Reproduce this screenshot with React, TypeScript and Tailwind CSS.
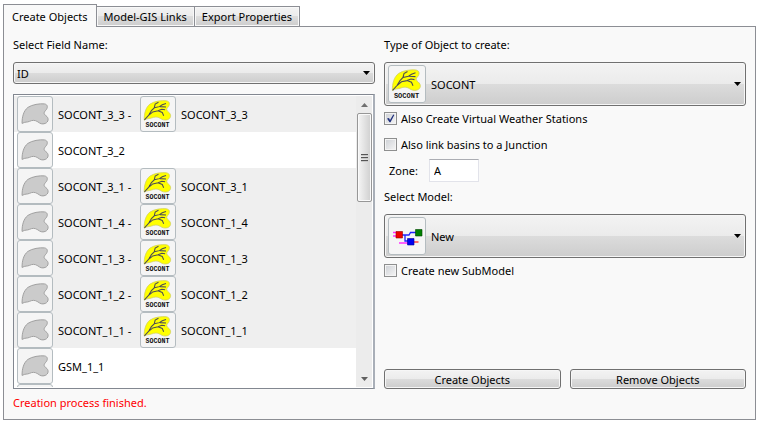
import { useState } from "react";
import type { ReactNode } from "react";

const raised =
  "rounded-[3px] border border-[#707070] bg-[linear-gradient(#f3f3f3,#ebebeb_50%,#dcdcdc_50%,#cdcdcd)] shadow-[inset_0_0_0_1px_#f6f6f6]";

function IconFrame({ children, large }: { children: ReactNode; large?: boolean }) {
  return (
    <span
      className={
        "block shrink-0 rounded-[3px] border border-[#b4bcc0] bg-[#f5f5f5] " +
        (large ? "size-[38px]" : "size-9")
      }
    >
      {children}
    </span>
  );
}

function BasinIcon() {
  return (
    <svg viewBox="0 0 36 36" className="size-full" aria-hidden="true">
      <path
        d="M4.3 28C4.2 21 6 14.5 10.5 11C15 8 23 6.8 28 7.3C32 8 31.8 11.8 29 14.5C27 16.8 27.3 18.2 29.6 19.8C33 22.2 32.5 26.5 28.8 28C25.5 29.3 23.3 28 21 26.3C18 24.2 15 24.4 12.2 25.8C9.5 27 7.8 26 4.3 28Z"
        fill="#cbcbcb"
        stroke="#9c9c9c"
        strokeWidth="1"
      />
    </svg>
  );
}

function SocontIcon() {
  return (
    <svg viewBox="0 0 36 36" className="size-full" aria-hidden="true">
      <path
        d="M3.4 24.5C3.2 17.5 5 11 9.5 7.5C14 4.4 22 3.4 27 4C31 4.8 30.8 8.6 28.2 11.2C26.6 13 27 14.3 29.2 16C32.4 18.6 32 22.6 28.2 24C24.8 25 22.6 24 20.4 22.6C17.2 20.4 14 21.2 11 22.3C8 23.3 7 22.3 3.4 24.5Z"
        fill="#ffff00"
        stroke="#cfcf60"
        strokeWidth="0.8"
      />
      <path
        d="M3.6 24.3L8 19.5L11 14.5L14 11.5L15 7.5L18.5 5.5M8 19.5L12.5 15.8L18 14.6L22.5 16.3L24 19.8M14 11.5L19.5 10.2L22.5 8.2L26.5 6.8M20 10.2L26.5 10.6M18 14.6L22 13L25.5 13.6"
        fill="none"
        stroke="#4b4b55"
        strokeWidth="1.1"
      />
      <text
        x="17.5"
        y="32"
        textAnchor="middle"
        fill="#111"
        className="font-['Liberation_Mono',monospace] text-[7px] font-bold"
      >
        SOCONT
      </text>
    </svg>
  );
}

function ModelIcon() {
  return (
    <svg viewBox="0 0 36 36" className="size-full" aria-hidden="true">
      <g fill="none" strokeWidth="1.3">
        <path d="M4 14.5H8M4 18H8M10 25H19" stroke="#ff30ff" />
        <path d="M13 17H20L21.5 14.5H27M16 17V23H19" stroke="#2020ff" />
        <path d="M25 24H29.5" stroke="#f22" />
      </g>
      <path d="M7 13.5H13.5V20H7Z" fill="#f00000" stroke="#900" strokeWidth="0.6" />
      <path d="M26.5 11.5H33V18H26.5Z" fill="#008000" stroke="#004800" strokeWidth="0.6" />
      <path d="M18.5 20.5H25V27H18.5Z" fill="#0000f0" stroke="#009" strokeWidth="0.6" />
    </svg>
  );
}

function DownArrow() {
  return (
    <svg
      viewBox="0 0 7 4"
      className="pointer-events-none absolute top-1/2 right-[5px] h-1 w-[7px] -translate-y-1/2"
      aria-hidden="true"
    >
      <path d="M0 0H7L3.5 4Z" fill="#000" />
    </svg>
  );
}

function IconSelect({ id, option, icon }: { id: string; option: string; icon: ReactNode }) {
  return (
    <div className="relative mt-2">
      <select id={id} className={"block h-11 w-full appearance-none pl-[46px] " + raised}>
        <option>{option}</option>
      </select>
      <span className="pointer-events-none absolute top-[3px] left-1">
        <IconFrame large>{icon}</IconFrame>
      </span>
      <DownArrow />
    </div>
  );
}

function CheckField({
  label,
  defaultChecked,
  className,
}: {
  label: string;
  defaultChecked?: boolean;
  className: string;
}) {
  return (
    <label className={"flex h-[17px] items-center gap-1 " + className}>
      <span className="relative size-[13px]">
        <input
          type="checkbox"
          defaultChecked={defaultChecked}
          className="peer block size-[13px] appearance-none border border-[#8e8f8f] bg-linear-to-br from-[#cdd0d5] to-[#f6f6f6] shadow-[inset_0_0_0_1px_#f4f4f4]"
        />
        <svg
          viewBox="0 0 13 13"
          className="pointer-events-none absolute inset-0 hidden size-[13px] peer-checked:block"
          aria-hidden="true"
        >
          <path d="M3 6.5L5 6L6 8L9.3 2.5L10.3 3L6.5 10.3H5.5Z" fill="#21327e" />
        </svg>
      </span>
      {label}
    </label>
  );
}

const rows = [
  { name: "SOCONT_3_3", linked: true },
  { name: "SOCONT_3_2", linked: false },
  { name: "SOCONT_3_1", linked: true },
  { name: "SOCONT_1_4", linked: true },
  { name: "SOCONT_1_3", linked: true },
  { name: "SOCONT_1_2", linked: true },
  { name: "SOCONT_1_1", linked: true },
  { name: "GSM_1_1", linked: false },
  { name: "", linked: false },
];

function ObjectList() {
  return (
    <div className="mt-[10px] flex h-[295px] border border-r-2 border-[#828790] border-r-[#a9afb8] bg-white py-px pr-px">
      <ul className="min-w-0 flex-1 overflow-hidden">
        {rows.map((row, i) => (
          <li
            key={i}
            className={
              "flex h-9 items-center gap-[5px] pl-[3px] " + (row.linked ? "bg-[#efefef]" : "")
            }
          >
            <IconFrame>
              <BasinIcon />
            </IconFrame>
            {row.linked ? (
              <>
                <span className="w-[77px] whitespace-nowrap">{row.name} -</span>
                <IconFrame>
                  <SocontIcon />
                </IconFrame>
                <span>{row.name}</span>
              </>
            ) : (
              <span>{row.name}</span>
            )}
          </li>
        ))}
      </ul>
      <div className="flex w-4 flex-col items-center bg-[#ececec]">
        <button aria-label="Scroll up" className="grid h-[17px] w-full place-items-center">
          <svg viewBox="0 0 7 4" className="h-1 w-[7px]" aria-hidden="true">
            <path d="M0 4H7L3.5 0Z" fill="#707070" />
          </svg>
        </button>
        <div className="grid h-[89px] w-[15px] place-content-center gap-px rounded-[2px] border border-[#979797] bg-linear-to-r from-[#f5f5f5] to-[#cfcfcf] shadow-[inset_0_0_0_1px_#fafafa]">
          <span className="h-[2px] w-[7px] border-t border-[#555] bg-[#c8c8c8]" />
          <span className="h-[2px] w-[7px] border-t border-[#555] bg-[#c8c8c8]" />
          <span className="h-[2px] w-[7px] border-t border-[#555] bg-[#c8c8c8]" />
        </div>
        <button aria-label="Scroll down" className="mt-auto grid h-[17px] w-full place-items-center">
          <svg viewBox="0 0 7 4" className="h-1 w-[7px]" aria-hidden="true">
            <path d="M0 0H7L3.5 4Z" fill="#606060" />
          </svg>
        </button>
      </div>
    </div>
  );
}

const tabs = ["Create Objects", "Model-GIS Links", "Export Properties"];

export default function App() {
  const [active, setActive] = useState(0);
  return (
    <main className="bg-white px-[3px] pt-1 pb-[2px] font-['Noto_Sans','Open_Sans',sans-serif] text-[11px] leading-[17px] text-black">
      <div role="tablist" className="flex items-end">
        {tabs.map((tab, i) => (
          <button
            key={tab}
            role="tab"
            aria-selected={active === i}
            onClick={() => setActive(i)}
            className={
              active === i
                ? "relative -mb-px h-[23px] border border-b-0 border-[#8c8e94] bg-[#f9f9f9] px-2"
                : "h-5 border border-b-0 border-l-0 border-[#8c8e94] bg-[linear-gradient(#f3f3f3,#ebebeb_50%,#dddddd_50%,#cdcdcd)] px-[7px] shadow-[inset_0_0_0_1px_#f8f8f8]"
            }
          >
            {tab}
          </button>
        ))}
      </div>
      <section className="border border-[#8c8e94] bg-[#f9f9f9] px-[9px] pt-[9px] pb-2">
        <div className="grid grid-cols-2 gap-[9px]">
          <div>
            <label htmlFor="field" className="mb-[9px] block">
              Select Field Name:
            </label>
            <div className="relative">
              <select
                id="field"
                className={"block h-[22px] w-full appearance-none pl-[3px] " + raised}
              >
                <option>ID</option>
              </select>
              <DownArrow />
            </div>
            <ObjectList />
          </div>
          <div className="flex flex-col">
            <label htmlFor="type" className="mb-px">
              Type of Object to create:
            </label>
            <IconSelect id="type" option="SOCONT" icon={<SocontIcon />} />
            <CheckField
              label="Also Create Virtual Weather Stations"
              defaultChecked
              className="mt-1"
            />
            <CheckField label="Also link basins to a Junction" className="mt-[9px]" />
            <div className="mt-[6px] flex items-center pl-[5px]">
              <label htmlFor="zone" className="w-10">
                Zone:
              </label>
              <input
                id="zone"
                defaultValue="A"
                className="h-[23px] w-[50px] border border-[#e2e3ea] border-t-[#abadb3] bg-white px-1"
              />
            </div>
            <label htmlFor="model" className="mt-[6px] mb-px">
              Select Model:
            </label>
            <IconSelect id="model" option="New" icon={<ModelIcon />} />
            <CheckField label="Create new SubModel" className="mt-1" />
            <div className="mt-auto grid grid-cols-2 gap-[9px]">
              <button className={"h-5 " + raised}>Create Objects</button>
              <button className={"h-5 " + raised}>Remove Objects</button>
            </div>
          </div>
        </div>
        <p className="mt-[5px] text-[#ff0000]">Creation process finished.</p>
      </section>
    </main>
  );
}
